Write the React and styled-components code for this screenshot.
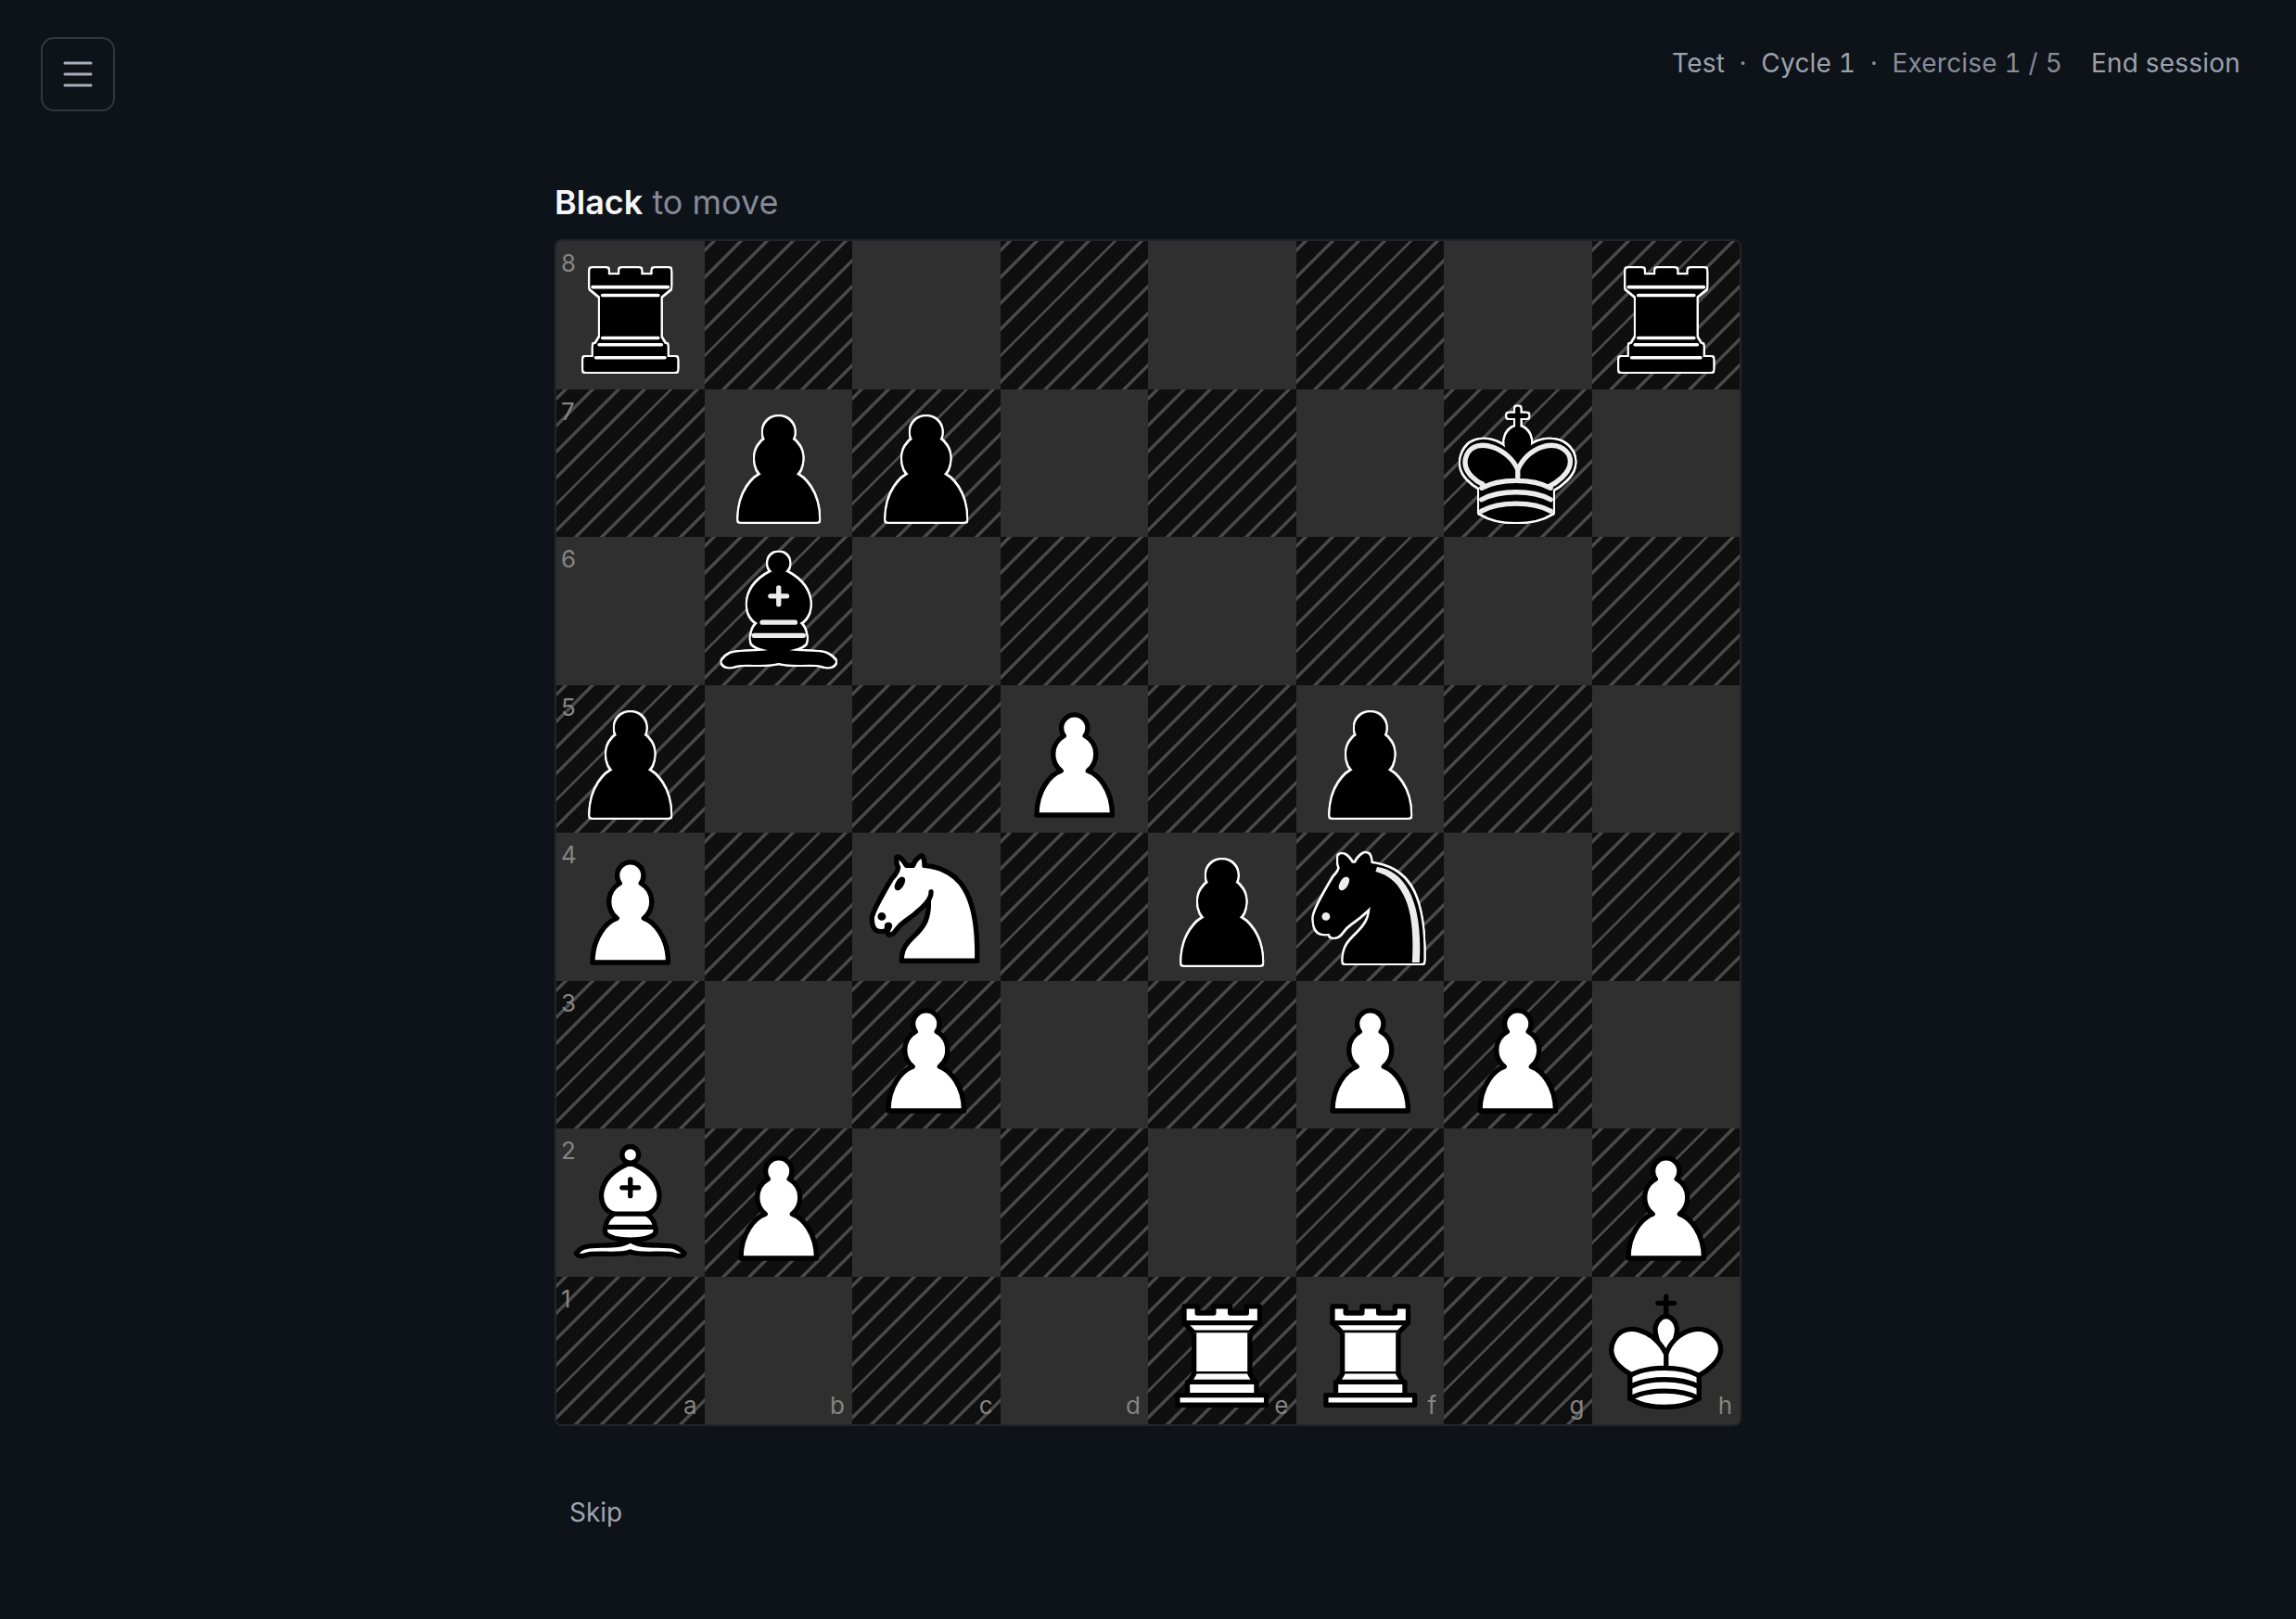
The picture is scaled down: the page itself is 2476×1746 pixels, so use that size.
import styled, { createGlobalStyle } from 'styled-components';

const GlobalStyle = createGlobalStyle`
  html, body {
    margin: 0;
    background: #0e1219;
    font-family: Inter, "Liberation Sans", sans-serif;
  }
`;

const Page = styled.div`
  min-height: 1746px;
  display: flex;
  flex-direction: column;
  align-items: center;
  box-sizing: border-box;
`;

const TopBar = styled.header`
  align-self: stretch;
  display: flex;
  align-items: flex-start;
  justify-content: space-between;
  padding: 40px 60px 0 44px;
`;

const MenuButton = styled.button`
  width: 80px;
  height: 80px;
  display: flex;
  align-items: center;
  justify-content: center;
  padding: 0;
  background: transparent;
  border: 2px solid #32363d;
  border-radius: 14px;
  color: #a9acba;
`;

const SessionInfo = styled.div`
  display: flex;
  align-items: center;
  height: 56px;
  font-size: 28px;
  letter-spacing: 0.2px;
  font-variant-numeric: tabular-nums;
  color: #8b909c;
`;

const InfoItem = styled.span`
  color: ${(p) => (p.$strong ? '#9ca1ad' : '#878c98')};
`;

const Dot = styled.span`
  margin: 0 15.5px;
  color: #878c98;
`;

const EndButton = styled.button`
  margin-left: 31px;
  padding: 0;
  background: none;
  border: none;
  font: inherit;
  letter-spacing: inherit;
  color: #9ca1ad;
`;

const Main = styled.main`
  width: 1280px;
  margin-top: 76px;
  display: flex;
  flex-direction: column;
`;

const Turn = styled.div`
  font-size: 36px;
  line-height: 44px;
  color: #858a96;
  margin-bottom: 18px;
`;

const TurnSide = styled.strong`
  font-weight: 600;
  color: #f5f6f8;
`;

const Board = styled.div`
  display: grid;
  grid-template-columns: repeat(8, 1fr);
  grid-auto-rows: 159.5px;
  border: 2px solid #23252a;
  border-radius: 8px;
  overflow: hidden;
`;

const Square = styled.div`
  position: relative;
  background: ${(p) =>
    p.$dark
      ? 'repeating-linear-gradient(-45deg, #0f0f0f 0 16.5px, #484848 16.5px 20px)'
      : '#2f2f2f'};
`;

const Rank = styled.span`
  position: absolute;
  top: 10px;
  left: 5px;
  font-size: 26px;
  line-height: 28px;
  color: #858585;
`;

const File = styled.span`
  position: absolute;
  right: 8px;
  bottom: 6px;
  font-size: 26px;
  line-height: 28px;
  color: #858585;
`;

const PieceSvg = styled.svg`
  position: absolute;
  inset: 0;
  width: 100%;
  height: 100%;
  ${(p) =>
    p.$black &&
    'filter: drop-shadow(2px 0 0 #fff) drop-shadow(-2px 0 0 #fff) drop-shadow(0 2px 0 #fff) drop-shadow(0 -2px 0 #fff);'}
`;

const SkipButton = styled.button`
  align-self: flex-start;
  margin-top: 61px;
  padding: 12px 16px;
  background: none;
  border: none;
  font: inherit;
  font-size: 28px;
  line-height: 40px;
  color: #a0a4b0;
`;

const PAWN = 'M22.5 9c-2.21 0-4 1.79-4 4 0 .89.29 1.71.78 2.38C17.33 16.5 16 18.59 16 21c0 2.03.94 3.84 2.41 5.03-3 1.06-7.41 5.55-7.41 13.47h23c0-7.92-4.41-12.41-7.41-13.47 1.47-1.19 2.41-3 2.41-5.03 0-2.41-1.33-4.5-3.28-5.62.49-.67.78-1.49.78-2.38 0-2.21-1.79-4-4-4z';
const KING_BODY = 'M11.5 37c5.5 3.5 15.5 3.5 21 0v-7s9-4.5 6-10.5c-4-6.5-13.5-3.5-16 4V27v-3.5c-3.5-7.5-13-10.5-16-4-3 6 5 10 5 10V37z';
const KING_TOP = 'M22.5 25s4.5-7.5 3-10.5c0 0-1-2.5-3-2.5s-3 2.5-3 2.5c-1.5 3 3 10.5 3 10.5';
const KING_BANDS = 'M11.5 30c5.5-3 15.5-3 21 0m-21 3.5c5.5-3 15.5-3 21 0m-21 3.5c5.5-3 15.5-3 21 0';
const KNIGHT_NECK = 'M22 10c10.5 1 16.5 8 16 29H15c0-9 10-6.5 8-21';
const KNIGHT_HEAD = 'M24 18c.38 2.91-5.55 7.37-8 9-3 2-2.82 4.34-5 4-1.042-.94 1.41-3.04 0-3-1 0 .19 1.23-1 2-1 0-4.003 1-4-4 0-2 6-12 6-12s1.89-1.9 2-3.5c-.73-.994-.5-2-.5-3 1-1 3 2.5 3 2.5h2s.78-1.992 2.5-3c1 0 1 3 1 3';
const KNIGHT_EYES = 'M9.5 25.5a.5.5 0 1 1-1 0 .5.5 0 1 1 1 0zm5.433-9.75a.5 1.5 30 1 1-.866-.5.5 1.5 30 1 1 .866.5z';

const pieces = {
  P: <path d={PAWN} fill="#fff" />,
  p: <path d={PAWN} fill="#000" />,
  R: (
    <g fill="#fff">
      <path d="M9 39h27v-3H9v3zM12 36v-4h21v4H12zM11 14V9h4v2h5V9h5v2h5V9h4v5" strokeLinecap="butt" />
      <path d="M34 14l-3 3H14l-3-3" />
      <path d="M31 17v12.5H14V17" strokeLinecap="butt" strokeLinejoin="miter" />
      <path d="M31 29.5l1.5 2.5h-20l1.5-2.5" />
      <path d="M11 14h23" fill="none" strokeLinejoin="miter" />
    </g>
  ),
  r: (
    <g fill="#000">
      <path d="M9 39h27v-3H9v3zM12.5 32l1.5-2.5h17l1.5 2.5h-20zM12 36v-4h21v4H12z" strokeLinecap="butt" />
      <path d="M14 29.5v-13h17v13H14z" strokeLinecap="butt" strokeLinejoin="miter" />
      <path d="M14 16.5L11 14h23l-3 2.5H14zM11 14V9h4v2h5V9h5v2h5V9h4v5H11z" strokeLinecap="butt" />
      <path d="M12 35.5h21M13 31.5h19M14 29.5h17M14 16.5h17M11 14h23" fill="none" stroke="#fff" strokeWidth="1" strokeLinejoin="miter" />
    </g>
  ),
  N: (
    <g>
      <path d={KNIGHT_NECK} fill="#fff" />
      <path d={KNIGHT_HEAD} fill="#fff" />
      <path d={KNIGHT_EYES} fill="#000" />
    </g>
  ),
  n: (
    <g>
      <path d={KNIGHT_NECK} fill="#000" />
      <path d={KNIGHT_HEAD} fill="#000" />
      <path d={KNIGHT_EYES} fill="#ececec" stroke="#ececec" />
      <path d="M24.55 10.4l-.45 1.45.5.15c3.15 1 5.65 2.49 7.9 6.75S35.75 29.06 35.25 39l-.05.5h2.25l.05-.5c.5-10.06-.88-16.85-3.25-21.34-2.37-4.49-5.79-6.64-9.19-7.16l-.51-.1z" fill="#ececec" stroke="none" />
    </g>
  ),
};

function bishop(fill, lines) {
  return (
    <g>
      <g fill={fill} strokeLinecap="butt">
        <path d="M9 36c3.39-.97 10.11.43 13.5-2 3.39 2.43 10.11 1.03 13.5 2 0 0 1.65.54 3 2-.68.97-1.65.99-3 .5-3.39-.97-10.11.46-13.5-1-3.39 1.46-10.11.03-13.5 1-1.354.49-2.323.47-3-.5 1.354-1.94 3-2 3-2z" />
        <path d="M15 32c2.5 2.5 12.5 2.5 15 0 .5-1.5 0-2 0-2 0-2.5-2.5-4-2.5-4 5.5-1.5 6-11.5-5-15.5-11 4-10.5 14-5 15.5 0 0-2.5 1.5-2.5 4 0 0-.5.5 0 2z" />
        <path d="M25 8a2.5 2.5 0 1 1-5 0 2.5 2.5 0 1 1 5 0z" />
      </g>
      <path d="M17.5 26h10M15 30h15m-7.5-14.5v5M20 18h5" stroke={lines} strokeLinejoin="miter" />
    </g>
  );
}

pieces.B = bishop('#fff', '#000');
pieces.b = bishop('#000', '#ececec');

pieces.K = (
  <g>
    <path d="M22.5 11.63V6M20 8h5" strokeLinejoin="miter" />
    <path d={KING_TOP} fill="#fff" strokeLinecap="butt" strokeLinejoin="miter" />
    <path d={KING_BODY} fill="#fff" />
    <path d={KING_BANDS} />
  </g>
);

pieces.k = (
  <g>
    <path d="M22.5 11.63V6" strokeLinejoin="miter" />
    <path d={KING_TOP} fill="#000" strokeLinecap="butt" strokeLinejoin="miter" />
    <path d={KING_BODY} fill="#000" />
    <path d="M20 8h5" strokeLinejoin="miter" />
    <path d="M32 29.5s8.5-4 6.03-9.65C34.15 14 25 18 22.5 24.5v2.1-2.1C20 18 9.906 14 6.997 19.85c-2.497 5.65 4.853 9 4.853 9" stroke="#ececec" />
    <path d={KING_BANDS} stroke="#ececec" />
  </g>
);

function Piece({ code }) {
  const black = code === code.toLowerCase();
  return (
    <PieceSvg
      $black={black}
      viewBox="0 0 45 45"
      fill="none"
      fillRule="evenodd"
      stroke="#000"
      strokeWidth="1.5"
      strokeLinecap="round"
      strokeLinejoin="round"
    >
      {pieces[code]}
    </PieceSvg>
  );
}

const position = [
  'r......r',
  '.pp...k.',
  '.b......',
  'p..P.p..',
  'P.N.pn..',
  '..P..PP.',
  'BP.....P',
  '....RR.K',
];

const files = 'abcdefgh';

export default function App() {
  return (
    <Page>
      <GlobalStyle />
      <TopBar>
        <MenuButton aria-label="Menu">
          <svg width="32" height="28" viewBox="0 0 32 28" fill="none" stroke="currentColor" strokeWidth="3" strokeLinecap="round">
            <path d="M2 2h28M2 14h28M2 26h28" />
          </svg>
        </MenuButton>
        <SessionInfo>
          <InfoItem $strong>Test</InfoItem>
          <Dot>·</Dot>
          <InfoItem $strong>Cycle 1</InfoItem>
          <Dot>·</Dot>
          <InfoItem>Exercise 1 / 5</InfoItem>
          <EndButton>End session</EndButton>
        </SessionInfo>
      </TopBar>
      <Main>
        <Turn>
          <TurnSide>Black</TurnSide> to move
        </Turn>
        <Board>
          {position.map((row, r) =>
            row.split('').map((code, c) => (
              <Square key={files[c] + r} $dark={(r + c) % 2 === 1}>
                {c === 0 && <Rank>{8 - r}</Rank>}
                {r === 7 && <File>{files[c]}</File>}
                {code !== '.' && <Piece code={code} />}
              </Square>
            ))
          )}
        </Board>
        <SkipButton>Skip</SkipButton>
      </Main>
    </Page>
  );
}
